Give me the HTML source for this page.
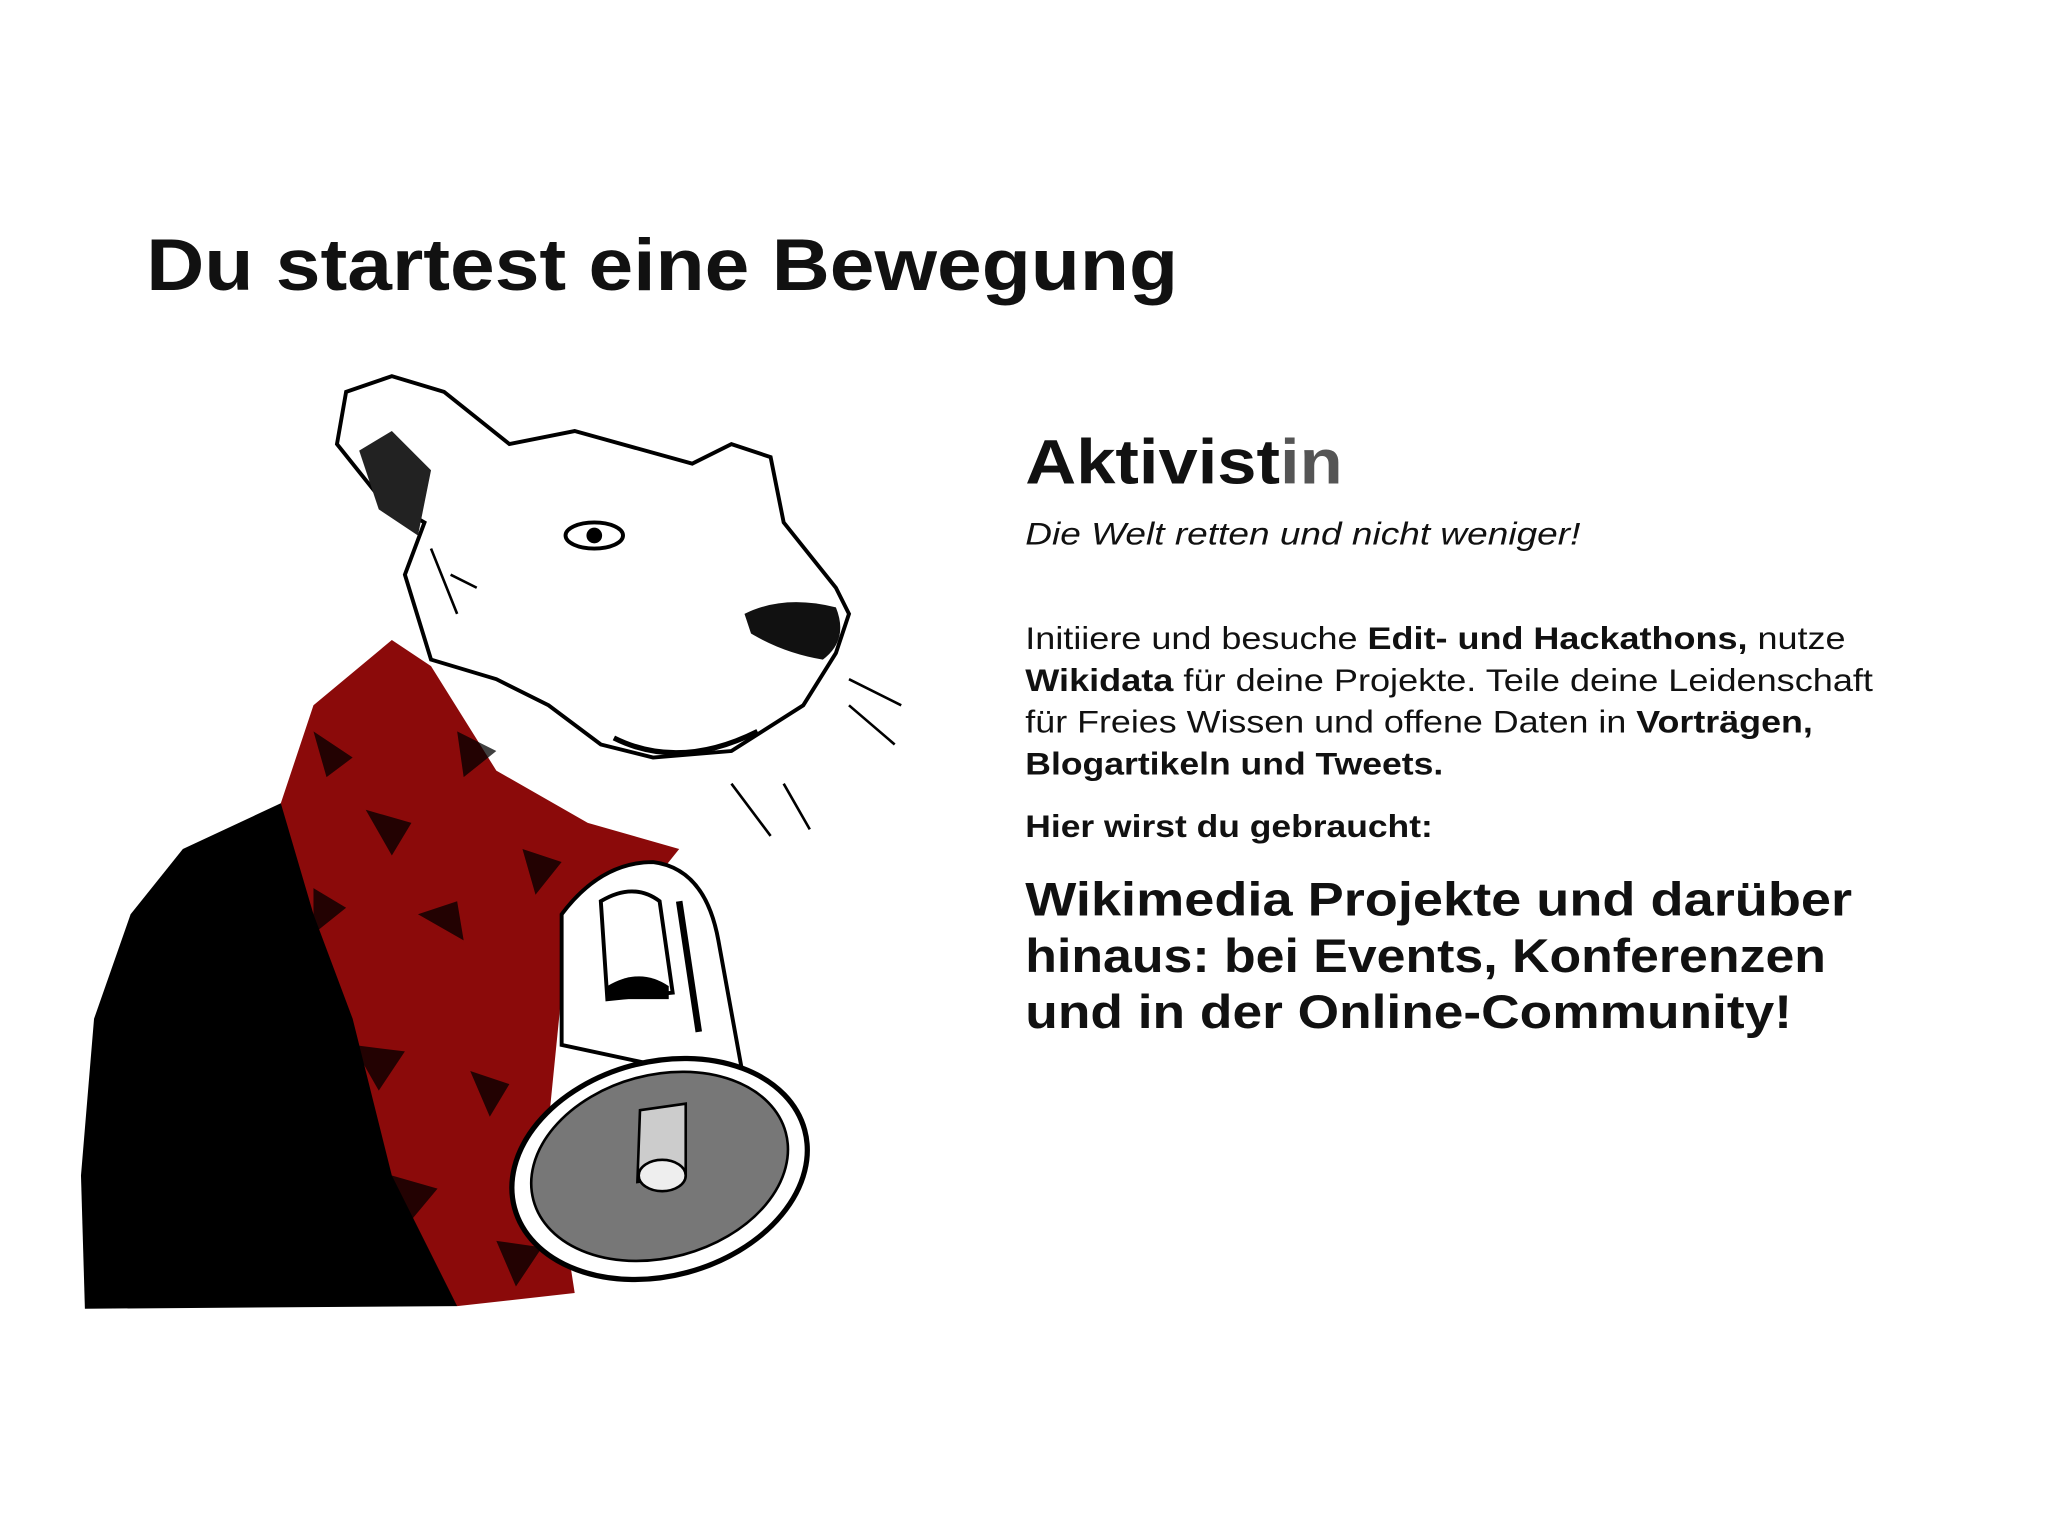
<!DOCTYPE html>
<html><head><meta charset="utf-8"><style>
html,body{margin:0;padding:0;background:#fff;}
svg{display:block}
text{font-family:"Liberation Sans",sans-serif;fill:#111;}
</style></head><body>
<svg width="2048" height="1536" viewBox="0 0 1568 1176" xmlns="http://www.w3.org/2000/svg">
<rect width="1568" height="1176" fill="#fff"/>
<text x="112" y="222" font-size="56" font-weight="bold" textLength="790" lengthAdjust="spacingAndGlyphs">Du startest eine Bewegung</text>

<!-- illustration -->
<g>
<path d="M65 1002 L62 900 L72 780 L100 700 L140 650 L215 615 L300 640 L340 760 L350 1000 Z" fill="#000"/>
<path d="M215 615 L240 540 L300 490 L330 510 L380 590 L450 630 L520 650 L480 700 L430 760 L420 860 L440 990 L350 1000 L300 900 L270 780 L240 700 Z" fill="#8b0a0a"/>
<g fill="#000" opacity="0.75">
<path d="M240 560 l30 20 -20 15z M280 620 l35 10 -15 25z M320 700 l30 -10 5 30z M270 800 l40 5 -20 30z M350 560 l30 15 -25 20z M400 650 l30 10 -20 25z M300 900 l35 10 -25 30z M360 820 l30 10 -15 25z M240 680 l25 15 -25 20z M380 950 l35 5 -20 30z"/>
</g>
<path d="M330 505 L310 440 L325 400 L290 380 L258 340 L265 300 L300 288 L340 300 L390 340 L440 330 L530 355 L560 340 L590 350 L600 400 L640 450 L650 470 L640 500 L615 540 L560 575 L500 580 L460 570 L420 540 L380 520 Z" fill="#fff" stroke="#000" stroke-width="3"/>
<path d="M275 345 L300 330 L330 360 L320 410 L290 390 Z" fill="#222"/>
<path d="M570 470 Q600 455 640 465 Q650 490 630 505 Q600 500 575 485 Z" fill="#111"/>
<ellipse cx="455" cy="410" rx="22" ry="10" fill="#fff" stroke="#000" stroke-width="3"/>
<circle cx="455" cy="410" r="6" fill="#000"/>
<path d="M470 565 Q520 590 580 560" fill="none" stroke="#000" stroke-width="4"/>
<path d="M330 420 L350 470 M345 440 l20 10 M560 600 l30 40 M600 600 l20 35 M650 520 l40 20 M650 540 l35 30" stroke="#000" stroke-width="2"/>
<path d="M430 700 Q460 660 500 660 Q540 665 550 720 L570 830 L430 800 Z" fill="#fff" stroke="#000" stroke-width="3"/>
<path d="M460 690 Q485 675 505 690 L515 760 L465 765 Z" fill="#fff" stroke="#000" stroke-width="3"/>
<path d="M465 755 Q490 740 512 755 L512 765 L465 765 Z" fill="#000"/>
<path d="M520 690 l15 100" stroke="#000" stroke-width="5"/>
<ellipse cx="505" cy="895" rx="115" ry="82" transform="rotate(-15 505 895)" fill="#fff" stroke="#000" stroke-width="4"/>
<ellipse cx="505" cy="893" rx="100" ry="70" transform="rotate(-15 505 893)" fill="#777" stroke="#000" stroke-width="2"/>
<path d="M490 850 L525 845 L525 900 L488 905 Z" fill="#ccc" stroke="#000" stroke-width="2"/>
<ellipse cx="507" cy="900" rx="18" ry="12" fill="#eee" stroke="#000" stroke-width="2"/>
</g>

<text x="785" y="370" font-size="48" font-weight="bold" textLength="243" lengthAdjust="spacingAndGlyphs">Aktivist<tspan fill="#555">in</tspan></text>
<text x="785" y="417" font-size="24" font-style="italic" textLength="425" lengthAdjust="spacingAndGlyphs">Die Welt retten und nicht weniger!</text>

<g font-size="24">
<text x="785" y="497" textLength="628" lengthAdjust="spacingAndGlyphs">Initiiere und besuche <tspan font-weight="bold">Edit- und Hackathons,</tspan> nutze</text>
<text x="785" y="529" textLength="649" lengthAdjust="spacingAndGlyphs"><tspan font-weight="bold">Wikidata</tspan> für deine Projekte. Teile deine Leidenschaft</text>
<text x="785" y="561" textLength="603" lengthAdjust="spacingAndGlyphs">für Freies Wissen und offene Daten in <tspan font-weight="bold">Vorträgen,</tspan></text>
<text x="785" y="593" font-weight="bold" textLength="320" lengthAdjust="spacingAndGlyphs">Blogartikeln und Tweets.</text>
<text x="785" y="641" font-weight="bold" textLength="312" lengthAdjust="spacingAndGlyphs">Hier wirst du gebraucht:</text>
</g>
<g font-size="36" font-weight="bold">
<text x="785" y="701" textLength="633" lengthAdjust="spacingAndGlyphs">Wikimedia Projekte und darüber</text>
<text x="785" y="744" textLength="613" lengthAdjust="spacingAndGlyphs">hinaus: bei Events, Konferenzen</text>
<text x="785" y="787" textLength="587" lengthAdjust="spacingAndGlyphs">und in der Online-Community!</text>
</g>
</svg>
</body></html>
